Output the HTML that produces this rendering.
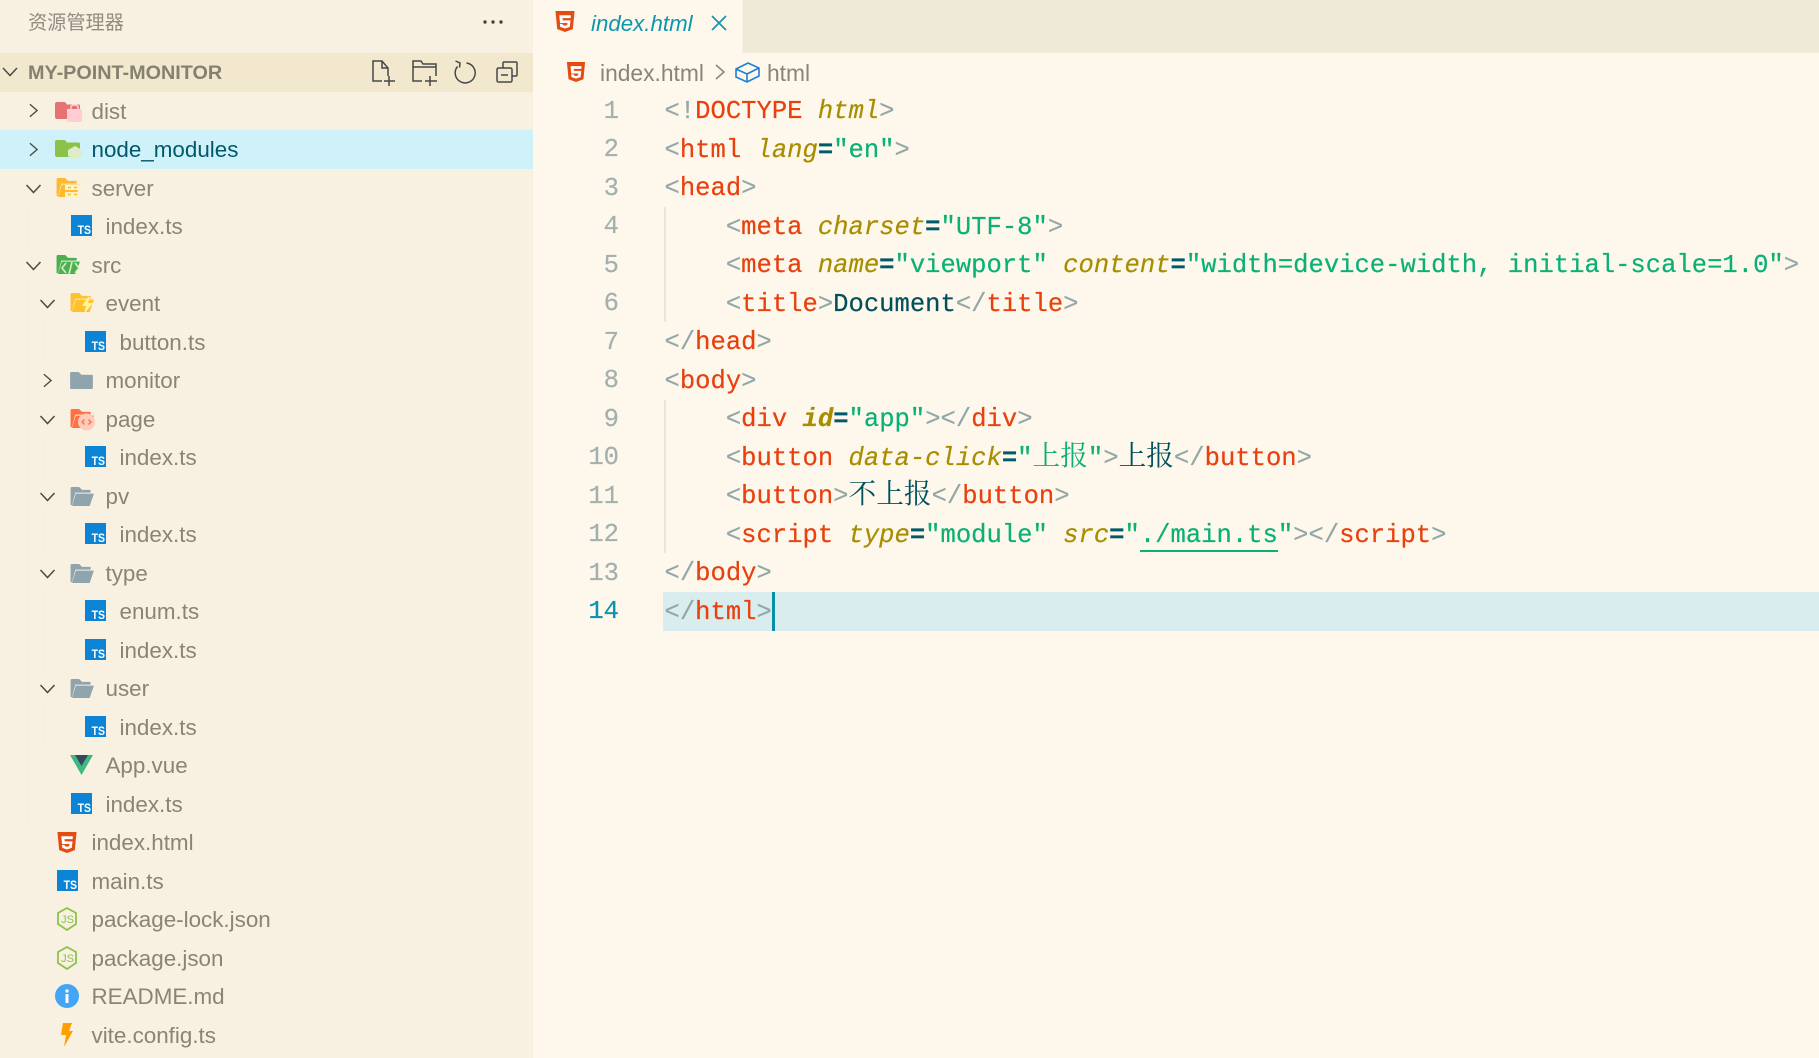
<!DOCTYPE html>
<html lang="zh">
<head>
<meta charset="UTF-8">
<title>index.html</title>
<style>
html,body{margin:0;padding:0;width:1819px;height:1058px;overflow:hidden;background:#fef8ec}
body{position:relative;font-family:"Liberation Sans","Noto Sans CJK SC",sans-serif}
.abs{position:absolute}
#side{position:absolute;left:0;top:0;width:533px;height:1058px;background:#f8f1e2}
#title{position:absolute;left:28px;top:9.500px;font-size:19.2px;line-height:28px;color:#918b80}
#dots{position:absolute;left:483px;top:20px}
#hdr{position:absolute;left:0;top:53px;width:533px;height:38.5px;background:#f2e8cd}
#hdr b{position:absolute;left:28px;top:0;font-size:19.8px;line-height:41px;color:#85806f}
#tree{position:absolute;left:0;top:91.5px;width:533px}
.r{position:relative;height:38.5px;line-height:39px;font-size:22.4px;color:#8a8478;white-space:pre}
.r.sel{background:#cff2fa;color:#00596b}
.r span{position:absolute;top:0}
.r svg{position:absolute}
.l0 span{left:91.5px}.l1 span{left:105.5px}.l2 span{left:119.5px}
.g{position:absolute;width:1px;background:#f3ecda}
#tabbar{position:absolute;left:533px;top:0;width:1286px;height:53px;background:#efe9d8}
#tab{position:absolute;left:533px;top:0;width:209px;height:53px;background:#fef8ec;border-right:1px solid #f6f0e0}
#tabt{position:absolute;left:591px;top:8.500px;font-size:22.3px;line-height:30px;font-style:italic;color:#0d97ac}
.bc{position:absolute;top:58px;font-size:22.8px;line-height:30px;color:#8a8478}
#nums{position:absolute;left:560px;top:92.5px;width:59px;text-align:right;font-family:"Liberation Mono",monospace;font-size:25.55px;color:#a3b0ae;-webkit-text-stroke:.2px}
#nums div{height:38.5px;line-height:38.5px}
#hl{position:absolute;left:663px;top:592px;width:1156px;height:38.5px;background:#d9edef}
#caret{position:absolute;left:772px;top:592px;width:3px;height:38.5px;background:#0a8fa8}
.guide{position:absolute;left:664px;width:2px;background:#ebe6d6}
#code{position:absolute;left:664.5px;top:93px;font-family:"Liberation Mono",monospace;font-size:25.55px;color:#00505c;-webkit-text-stroke:.2px}
#code div{height:38.5px;line-height:38.5px;white-space:pre}
.b{color:#93a7a8}.t{color:#e8400e}.a{color:#a88d00;font-style:italic}.e{color:#005a6b;font-weight:bold}.s{color:#0ab076}.x{color:#00505c}
.c{font-family:"Noto Serif CJK SC",serif;font-size:27.7px;line-height:1px;-webkit-text-stroke:0}
#ul{position:absolute;left:1140px;top:550px;width:138px;height:2px;background:#0ab076}
</style>
</head>
<body>
<svg width="0" height="0" style="position:absolute">
<defs>
<symbol id="ts" viewBox="0 0 22 22"><rect width="22" height="22" fill="#0b84d6"/><text x="21" y="20" text-anchor="end" font-family="Liberation Sans" font-weight="bold" font-size="12.5" fill="#fff" textLength="14" lengthAdjust="spacingAndGlyphs">TS</text></symbol>
<symbol id="h5" viewBox="0 0 20 22"><path d="M0 0H20L18.2 19L10 22L1.800 19Z" fill="#e44d12"/><path d="M4 4.500H16V7.500H7.400L7.700 9.800H15.800L15 16.600L10 18.300L5 16.600L4.700 13.500H7.500L7.700 14.700L10 15.500L12.300 14.700L12.600 12.600H4.800Z" fill="#fff"/></symbol>
<symbol id="cl" viewBox="0 0 26 20"><path d="M1 2.500Q1 1 2.500 1H10L13 4H23.500Q25 4 25 5.500V17.500Q25 19 23.500 19H2.500Q1 19 1 17.500Z" fill="currentColor"/></symbol>
<symbol id="op" viewBox="0 0 26 22"><path d="M1 2.500Q1 1 2.500 1H10L13 4H22V7H6L2.500 20H1Z" fill="currentColor"/><path d="M6.500 8H25.500L21 21H2.500Z" fill="currentColor"/></symbol>
<symbol id="js" viewBox="0 0 20 24"><path d="M10 1L19 6V17L10 23L1 17V6Z" fill="none" stroke="#8bc34a" stroke-width="1.800"/><text x="10.500" y="16" text-anchor="middle" font-family="Liberation Sans" font-size="11" fill="#8bc34a">JS</text></symbol>
<symbol id="cr" viewBox="0 0 10 16"><path d="M1 1L9 8L1 15" fill="none" stroke="#4a4a48" stroke-width="1.500"/></symbol>
<symbol id="cd" viewBox="0 0 16 10"><path d="M1 1L8 8.500L15 1" fill="none" stroke="#4a4a48" stroke-width="1.500"/></symbol>
</defs>
</svg>

<div id="side"></div>
<div id="title">资源管理器</div>
<svg id="dots" width="20" height="4"><circle cx="2" cy="2" r="1.700" fill="#444"/><circle cx="10" cy="2" r="1.700" fill="#444"/><circle cx="18" cy="2" r="1.700" fill="#444"/></svg>

<div id="hdr"><b>MY-POINT-MONITOR</b></div>
<svg class="abs" style="left:2px;top:67px" width="16" height="10"><use href="#cd"/></svg>
<svg class="abs" style="left:370px;top:58px" width="152" height="30" fill="none" stroke="#45474a" stroke-width="1.500">
<path d="M12 23H3V3H12L18 10V18M12 3V10H18"/><path d="M19 18V28M14 23H25"/>
<path d="M52 23H43V3H51L53 6H66V18M43 9H66"/><path d="M60 18V28M55 23H67"/>
<path d="M96.500 5A10 10 0 1 1 87.500 8.500M85.500 3L90 5L89.500 9.500"/>
<path d="M133 10V5Q133 4 134 4H146Q147 4 147 5V17Q147 18 146 18H142"/><rect x="127" y="10" width="15" height="14" rx="1.500"/><path d="M131 17H138"/>
</svg>

<div id="tree">
<div class="r l0"><svg style="left:29px;top:11.500px" width="9" height="15"><use href="#cr"/></svg><svg style="left:55px;top:10px" width="27" height="20" viewBox="0 0 27 20"><path d="M0 2Q0 0 2 0H10L12 2.500H24Q25 2.500 25 4V15Q25 17 23 17H2Q0 17 0 15Z" fill="#e57373"/><path d="M12 7H26Q27 7 27 9V18Q27 20 25 20H14Q12 20 12 18Z" fill="#ffcdd2"/><path d="M16 7V5Q16 3 19.500 3T23 5V7" fill="none" stroke="#ffcdd2" stroke-width="1.500"/></svg><span>dist</span></div>
<div class="r l0 sel"><svg style="left:29px;top:11.500px" width="9" height="15"><use href="#cr"/></svg><svg style="left:55px;top:10px" width="27" height="20" viewBox="0 0 27 20"><path d="M0 2Q0 0 2 0H10L12 2.500H24Q25 2.500 25 4V15Q25 17 23 17H2Q0 17 0 15Z" fill="#8bc34a"/><path d="M20 6L27 10V16L20 20L13 16V10Z" fill="#dcedc8"/></svg><span>node_modules</span></div>
<div class="r l0"><svg style="left:25px;top:15px" width="17" height="10"><use href="#cd"/></svg><svg style="left:55px;top:8px" width="27" height="23" viewBox="0 0 27 23"><g color="#ffb92e"><use href="#op" width="26" height="21"/></g><rect x="10" y="8" width="17" height="5" fill="#fff3c9"/><rect x="10" y="15" width="15" height="5" fill="#fff3c9"/><path d="M13 10.500H16M19 10.500H22M13 17.500H16M19 17.500H22" stroke="#ffb92e" stroke-width="1.400"/></svg><span>server</span></div>
<div class="r l1"><svg style="left:70.500px;top:8px" width="21" height="21"><use href="#ts"/></svg><span>index.ts</span></div>
<div class="r l0"><svg style="left:25px;top:15px" width="17" height="10"><use href="#cd"/></svg><svg style="left:55px;top:8px" width="27" height="23" viewBox="0 0 27 23"><g color="#4caf50"><use href="#op" width="26" height="21"/></g><path d="M11 9L7 14L11 19M17 8L14 20M20 9L24 14L20 19" fill="none" stroke="#d6efc8" stroke-width="1.600"/></svg><span>src</span></div>
<div class="r l1"><svg style="left:39px;top:15px" width="17" height="10"><use href="#cd"/></svg><svg style="left:69px;top:8px" width="27" height="23" viewBox="0 0 27 23"><g color="#ffc12e"><use href="#op" width="26" height="21"/></g><path d="M19 5L13 14H17L15 22L24 11H19L21 5Z" fill="#fff59d"/></svg><span>event</span></div>
<div class="r l2"><svg style="left:84.500px;top:8px" width="21" height="21"><use href="#ts"/></svg><span>button.ts</span></div>
<div class="r l1"><svg style="left:43px;top:11.500px" width="9" height="15"><use href="#cr"/></svg><svg style="left:69px;top:10px" width="25" height="19" color="#90a4ae"><use href="#cl"/></svg><span>monitor</span></div>
<div class="r l1"><svg style="left:39px;top:15px" width="17" height="10"><use href="#cd"/></svg><svg style="left:69px;top:8px" width="26" height="23" viewBox="0 0 26 23"><g color="#ff7043"><use href="#op" width="26" height="21"/></g><circle cx="17.500" cy="14" r="8.500" fill="#ffccbc"/><path d="M15.500 11.500L13 14L15.500 16.500M19.500 11.500L22 14L19.500 16.500" fill="none" stroke="#ff7043" stroke-width="1.400"/></svg><span>page</span></div>
<div class="r l2"><svg style="left:84.500px;top:8px" width="21" height="21"><use href="#ts"/></svg><span>index.ts</span></div>
<div class="r l1"><svg style="left:39px;top:15px" width="17" height="10"><use href="#cd"/></svg><svg style="left:69px;top:9px" width="26" height="21" color="#90a4ae"><use href="#op"/></svg><span>pv</span></div>
<div class="r l2"><svg style="left:84.500px;top:8px" width="21" height="21"><use href="#ts"/></svg><span>index.ts</span></div>
<div class="r l1"><svg style="left:39px;top:15px" width="17" height="10"><use href="#cd"/></svg><svg style="left:69px;top:9px" width="26" height="21" color="#90a4ae"><use href="#op"/></svg><span>type</span></div>
<div class="r l2"><svg style="left:84.500px;top:8px" width="21" height="21"><use href="#ts"/></svg><span>enum.ts</span></div>
<div class="r l2"><svg style="left:84.500px;top:8px" width="21" height="21"><use href="#ts"/></svg><span>index.ts</span></div>
<div class="r l1"><svg style="left:39px;top:15px" width="17" height="10"><use href="#cd"/></svg><svg style="left:69px;top:9px" width="26" height="21" color="#90a4ae"><use href="#op"/></svg><span>user</span></div>
<div class="r l2"><svg style="left:84.500px;top:8px" width="21" height="21"><use href="#ts"/></svg><span>index.ts</span></div>
<div class="r l1"><svg style="left:69.500px;top:9px" width="23" height="20" viewBox="0 0 23 20"><path d="M0 0H23L11.500 20Z" fill="#41b883"/><path d="M5 0H18L11.500 11Z" fill="#35495e"/></svg><span>App.vue</span></div>
<div class="r l1"><svg style="left:70.500px;top:8px" width="21" height="21"><use href="#ts"/></svg><span>index.ts</span></div>
<div class="r l0"><svg style="left:57px;top:9px" width="20" height="21"><use href="#h5"/></svg><span>index.html</span></div>
<div class="r l0"><svg style="left:56.500px;top:8px" width="21" height="21"><use href="#ts"/></svg><span>main.ts</span></div>
<div class="r l0"><svg style="left:57px;top:7px" width="20" height="24"><use href="#js"/></svg><span>package-lock.json</span></div>
<div class="r l0"><svg style="left:57px;top:7px" width="20" height="24"><use href="#js"/></svg><span>package.json</span></div>
<div class="r l0"><svg style="left:55px;top:7px" width="24" height="24" viewBox="0 0 24 24"><circle cx="12" cy="12" r="12" fill="#42a5f5"/><rect x="10.500" y="10" width="3" height="9" fill="#fff"/><rect x="10.500" y="5.500" width="3" height="3" fill="#fff"/></svg><span>README.md</span></div>
<div class="r l0"><svg style="left:61px;top:7px" width="12" height="24" viewBox="0 0 12 24"><path d="M2 0H11L8 8H12L3 24L5 12H0Z" fill="#ffa000"/></svg><span>vite.config.ts</span></div>
</div>
<div class="g" style="left:28px;top:207px;height:39px"></div>
<div class="g" style="left:28px;top:284px;height:539px"></div>
<div class="g" style="left:43px;top:322px;height:39px"></div>
<div class="g" style="left:43px;top:438px;height:39px"></div>
<div class="g" style="left:43px;top:515px;height:39px"></div>
<div class="g" style="left:43px;top:592px;height:77px"></div>
<div class="g" style="left:43px;top:707px;height:39px"></div>

<div id="tabbar"></div>
<div id="tab"></div>
<svg class="abs" style="left:555px;top:11px" width="20" height="21"><use href="#h5"/></svg>
<div id="tabt">index.html</div>
<svg class="abs" style="left:711px;top:15px" width="16" height="16" viewBox="0 0 16 16"><path d="M1 1L15 15M15 1L1 15" stroke="#1596ae" stroke-width="1.700"/></svg>

<svg class="abs" style="left:566px;top:62px" width="20" height="20"><use href="#h5"/></svg>
<div class="bc" style="left:600px">index.html</div>
<svg class="abs" style="left:715px;top:64px" width="10" height="16" viewBox="0 0 10 16"><path d="M1 1L9 8L1 15" fill="none" stroke="#8a8478" stroke-width="1.500"/></svg>
<svg class="abs" style="left:735px;top:62px" width="25" height="21" viewBox="0 0 25 21" fill="none" stroke="#1e7fd6" stroke-width="1.600"><path d="M1 7L13 1L24 6V14L12 20L1 15ZM1 7L12 12L24 6M12 12V20"/></svg>
<div class="bc" style="left:767px">html</div>

<div id="hl"></div>
<div class="guide" style="top:207px;height:115px"></div>
<div class="guide" style="top:400px;height:153px"></div>

<div id="nums">
<div>1</div><div>2</div><div>3</div><div>4</div><div>5</div><div>6</div><div>7</div><div>8</div><div>9</div><div>10</div><div>11</div><div>12</div><div>13</div><div style="color:#0a93ae">14</div>
</div>

<div id="code">
<div><span class="b">&lt;!</span><span class="t">DOCTYPE</span> <span class="a">html</span><span class="b">&gt;</span></div>
<div><span class="b">&lt;</span><span class="t">html</span> <span class="a">lang</span><span class="e">=</span><span class="s">"en"</span><span class="b">&gt;</span></div>
<div><span class="b">&lt;</span><span class="t">head</span><span class="b">&gt;</span></div>
<div>    <span class="b">&lt;</span><span class="t">meta</span> <span class="a">charset</span><span class="e">=</span><span class="s">"UTF-8"</span><span class="b">&gt;</span></div>
<div>    <span class="b">&lt;</span><span class="t">meta</span> <span class="a">name</span><span class="e">=</span><span class="s">"viewport"</span> <span class="a">content</span><span class="e">=</span><span class="s">"width=device-width, initial-scale=1.0"</span><span class="b">&gt;</span></div>
<div>    <span class="b">&lt;</span><span class="t">title</span><span class="b">&gt;</span><span class="x">Document</span><span class="b">&lt;/</span><span class="t">title</span><span class="b">&gt;</span></div>
<div><span class="b">&lt;/</span><span class="t">head</span><span class="b">&gt;</span></div>
<div><span class="b">&lt;</span><span class="t">body</span><span class="b">&gt;</span></div>
<div>    <span class="b">&lt;</span><span class="t">div</span> <span class="a" style="font-weight:bold">id</span><span class="e">=</span><span class="s">"app"</span><span class="b">&gt;&lt;/</span><span class="t">div</span><span class="b">&gt;</span></div>
<div>    <span class="b">&lt;</span><span class="t">button</span> <span class="a">data-click</span><span class="e">=</span><span class="s">"<span class="c">上报</span>"</span><span class="b">&gt;</span><span class="x c">上报</span><span class="b">&lt;/</span><span class="t">button</span><span class="b">&gt;</span></div>
<div>    <span class="b">&lt;</span><span class="t">button</span><span class="b">&gt;</span><span class="x c">不上报</span><span class="b">&lt;/</span><span class="t">button</span><span class="b">&gt;</span></div>
<div>    <span class="b">&lt;</span><span class="t">script</span> <span class="a">type</span><span class="e">=</span><span class="s">"module"</span> <span class="a">src</span><span class="e">=</span><span class="s">"./main.ts"</span><span class="b">&gt;&lt;/</span><span class="t">script</span><span class="b">&gt;</span></div>
<div><span class="b">&lt;/</span><span class="t">body</span><span class="b">&gt;</span></div>
<div><span class="b">&lt;/</span><span class="t">html</span><span class="b">&gt;</span></div>
</div>
<div id="ul"></div>
<div id="caret"></div>
</body>
</html>
